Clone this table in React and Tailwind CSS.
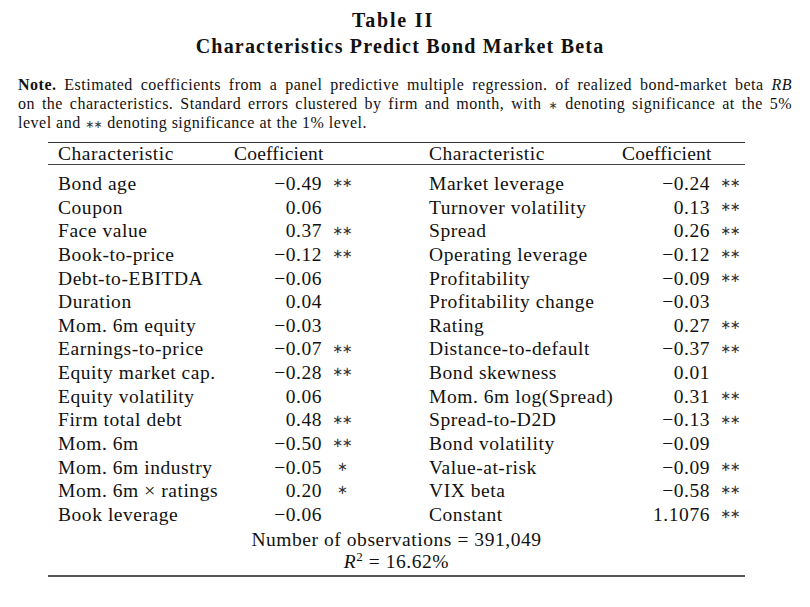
import React from "react";

const left = [
  ["Bond age", "−0.49", "∗∗"],
  ["Coupon", "0.06", ""],
  ["Face value", "0.37", "∗∗"],
  ["Book-to-price", "−0.12", "∗∗"],
  ["Debt-to-EBITDA", "−0.06", ""],
  ["Duration", "0.04", ""],
  ["Mom. 6m equity", "−0.03", ""],
  ["Earnings-to-price", "−0.07", "∗∗"],
  ["Equity market cap.", "−0.28", "∗∗"],
  ["Equity volatility", "0.06", ""],
  ["Firm total debt", "0.48", "∗∗"],
  ["Mom. 6m", "−0.50", "∗∗"],
  ["Mom. 6m industry", "−0.05", "∗"],
  ["Mom. 6m × ratings", "0.20", "∗"],
  ["Book leverage", "−0.06", ""],
];

const right = [
  ["Market leverage", "−0.24", "∗∗"],
  ["Turnover volatility", "0.13", "∗∗"],
  ["Spread", "0.26", "∗∗"],
  ["Operating leverage", "−0.12", "∗∗"],
  ["Profitability", "−0.09", "∗∗"],
  ["Profitability change", "−0.03", ""],
  ["Rating", "0.27", "∗∗"],
  ["Distance-to-default", "−0.37", "∗∗"],
  ["Bond skewness", "0.01", ""],
  ["Mom. 6m log(Spread)", "0.31", "∗∗"],
  ["Spread-to-D2D", "−0.13", "∗∗"],
  ["Bond volatility", "−0.09", ""],
  ["Value-at-risk", "−0.09", "∗∗"],
  ["VIX beta", "−0.58", "∗∗"],
  ["Constant", "1.1076", "∗∗"],
];

const serif = "font-['Liberation_Serif','Times_New_Roman',serif]";

function Stars({ s }) {
  return (
    <span className="w-[38px] shrink-0 flex justify-center">
      <span className="font-['DejaVu_Sans',sans-serif] text-[#333] text-[13px] leading-none tracking-[-1.5px] mr-[-1.5px] relative top-[-1px]">
        {s}
      </span>
    </span>
  );
}

function Row({ l, r }) {
  return (
    <div className="flex h-[23.64px] items-center leading-none">
      <span className="w-[176px] shrink-0 pl-[10px] box-content">{l[0]}</span>
      <span className="w-[88px] shrink-0 text-right">{l[1]}</span>
      <Stars s={l[2]} />
      <span className="w-[69px] shrink-0" />
      <span className="w-[193px] shrink-0">{r[0]}</span>
      <span className="w-[88px] shrink-0 text-right">{r[1]}</span>
      <Stars s={r[2]} />
    </div>
  );
}

export default function App() {
  return (
    <div className={`w-[810px] h-[607px] bg-white text-[#111] ${serif} overflow-hidden`}>
      <div className="pt-[7px] text-center font-bold text-[20px] leading-[26px]">
        <div className="tracking-[1.8px] pr-[24px]">Table II</div>
        <div className="tracking-[1.2px] pr-[10px]">Characteristics Predict Bond Market Beta</div>
      </div>
      <div className="mt-[15.5px] px-[18px] text-[16px] leading-[19px] tracking-[0.5px]">
        <div className="h-[19px] [text-align-last:justify] text-justify">
          <span className="font-bold">Note.</span> Estimated coefficients from a panel predictive multiple regression. of realized bond-market beta <i>RB</i>
        </div>
        <div className="h-[19px] [text-align-last:justify] text-justify">
          on the characteristics. Standard errors clustered by firm and month, with <span className="font-['DejaVu_Sans',sans-serif] text-[#333] text-[11px] leading-none">∗</span> denoting significance at the 5%
        </div>
        <div className="h-[19px]">
          level and <span className="font-['DejaVu_Sans',sans-serif] text-[#333] text-[11px] leading-none tracking-[-1px] mr-[1px]">∗∗</span> denoting significance at the 1% level.
        </div>
      </div>
      <div className="ml-[48px] mt-[10px] w-[697px] text-[19.5px] tracking-[0.55px]">
        <div className="h-[1.5px] bg-[#333]" />
        <div className="flex h-[21px] items-center leading-none">
          <span className="w-[176px] shrink-0 pl-[10px] box-content">Characteristic</span>
          <span className="w-[88px] shrink-0 tracking-[0.2px]">Coefficient</span>
          <span className="w-[38px] shrink-0" />
          <span className="w-[69px] shrink-0" />
          <span className="w-[193px] shrink-0">Characteristic</span>
          <span className="w-[88px] shrink-0 tracking-[0.2px]">Coefficient</span>
        </div>
        <div className="h-[1px] bg-[#444]" />
        <div className="h-[7px]" />
        {left.map((l, i) => (
          <Row key={i} l={l} r={right[i]} />
        ))}
        <div className="h-[23.64px] flex items-center justify-center leading-none pt-[3px]">
          Number of observations = 391,049
        </div>
        <div className="h-[23.64px] flex items-center justify-center leading-none">
          <span>
            <i>R</i>
            <span className="text-[13px] relative top-[-7px]">2</span> = 16.62%
          </span>
        </div>
        <div className="mt-[1px] h-[2px] bg-[#555]" />
      </div>
    </div>
  );
}
